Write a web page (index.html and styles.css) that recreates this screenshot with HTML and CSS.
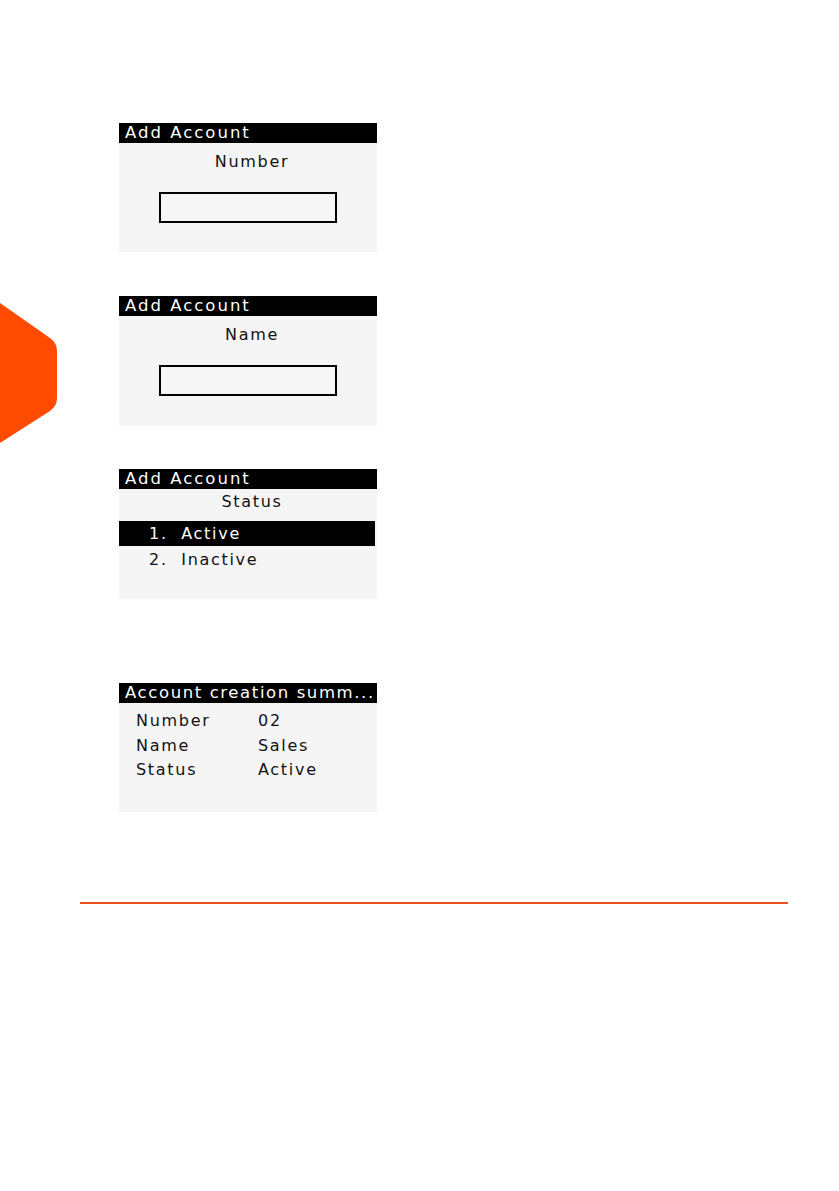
FILE: index.html
```html
<!DOCTYPE html>
<html>
<head>
<meta charset="utf-8">
<link rel="stylesheet" href="styles.css">
</head>
<body>
<div class="page">
  <svg class="tab" width="60" height="140" viewBox="0 0 60 140">
    <path d="M0 0 L50 35 Q57 40 57 48 L57 95 Q57 103 50 108 L0 140 Z" fill="#ff4b00"/>
  </svg>
  <div class="screens">
    <div class="lcd lcd1">
      <div class="title">Add Account</div>
      <div class="label">Number</div>
      <div class="field"></div>
    </div>
    <div class="lcd lcd2">
      <div class="title">Add Account</div>
      <div class="label">Name</div>
      <div class="field"></div>
    </div>
    <div class="lcd lcd3">
      <div class="title">Add Account</div>
      <div class="label label-status">Status</div>
      <div class="option selected">1.&nbsp; Active</div>
      <div class="option">2.&nbsp; Inactive</div>
    </div>
    <div class="lcd lcd4">
      <div class="title title-long">Account creation summ...</div>
      <div class="rows">
        <div class="row"><span class="k">Number</span><span class="v">02</span></div>
        <div class="row"><span class="k">Name</span><span class="v">Sales</span></div>
        <div class="row"><span class="k">Status</span><span class="v">Active</span></div>
      </div>
    </div>
  </div>
  <div class="rule"></div>
</div>
</body>
</html>
```

FILE: styles.css
```css
html, body {
  margin: 0;
  padding: 0;
  background: #ffffff;
}
.page {
  position: relative;
  width: 839px;
  height: 1191px;
  font-family: "DejaVu Sans", sans-serif;
}
.tab {
  position: absolute;
  left: 0;
  top: 303px;
}
.screens {
  padding-top: 123px;
  padding-left: 119px;
  display: flex;
  flex-direction: column;
}
.lcd {
  width: 258px;
  height: 129px;
  background: #f5f5f5;
  color: #111;
  font-size: 16px;
  letter-spacing: 1.7px;
  display: flex;
  flex-direction: column;
}
.lcd2 { margin-top: 44px; height: 130px; }
.lcd3 { margin-top: 43px; height: 130px; }
.lcd4 { margin-top: 84px; }
.title {
  background: #000;
  color: #fff;
  height: 20px;
  line-height: 20px;
  padding-left: 6px;
  font-size: 16.5px;
  letter-spacing: 2px;
  white-space: nowrap;
  overflow: hidden;
}
.title-long {
  letter-spacing: 1.6px;
}
.label {
  text-align: center;
  margin-top: 9px;
  line-height: 20px;
  padding-left: 8px;
}
.field {
  margin-top: 20px;
  margin-left: 40px;
  width: 174px;
  height: 27px;
  border: 2px solid #000;
  background: #f6f6f6;
}
.label-status {
  margin-top: 3px;
}
.option {
  height: 25px;
  line-height: 25px;
  padding-left: 30px;
  margin-right: 2px;
}
.option.selected {
  margin-top: 9px;
  background: #000;
  color: #fff;
}
.option + .option {
  margin-top: 1px;
}
.rows {
  padding-top: 6px;
  padding-left: 17px;
}
.row {
  display: flex;
  line-height: 24.5px;
}
.k { width: 122px; }
.rule {
  position: absolute;
  left: 80px;
  top: 902px;
  width: 708px;
  height: 2px;
  background: #e8501e;
}
```
